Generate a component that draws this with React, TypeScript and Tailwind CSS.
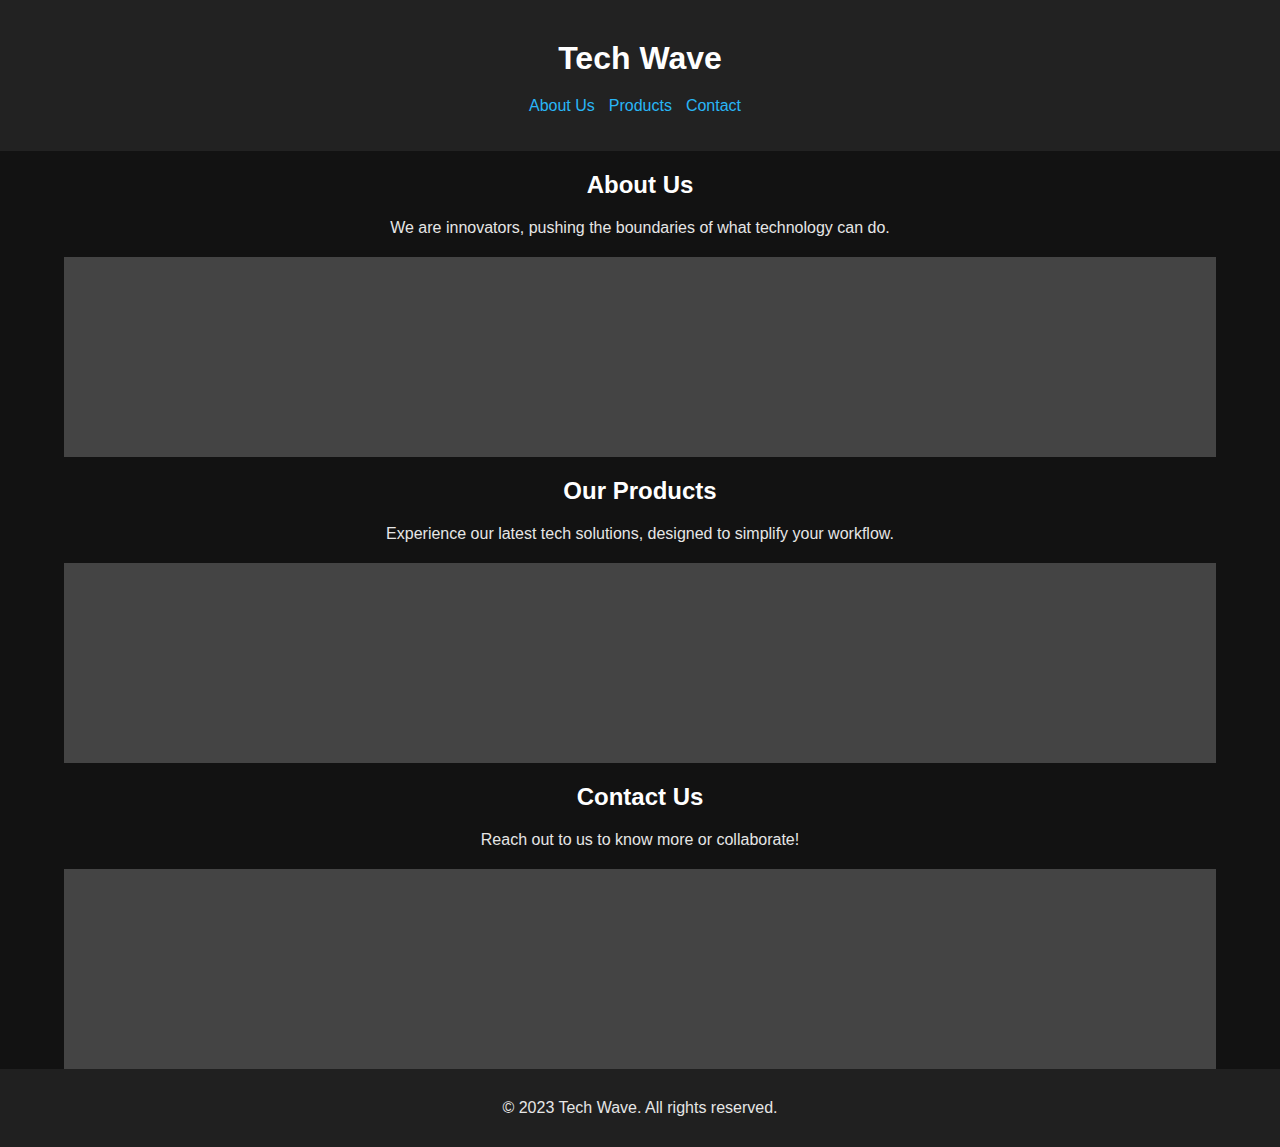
export default function App() {
  const sections = [
    { title: "About Us", text: "We are innovators, pushing the boundaries of what technology can do." },
    { title: "Our Products", text: "Experience our latest tech solutions, designed to simplify your workflow." },
    { title: "Contact Us", text: "Reach out to us to know more or collaborate!" },
  ];
  return (
    <div className="min-h-[1147px] bg-[#121212] text-white flex flex-col" style={{ fontFamily: '"Liberation Sans", Arial, sans-serif' }}>
      <header className="bg-[#222222] h-[151px] pt-[40px] flex flex-col items-center">
        <h1 className="text-[32px] leading-[37px] font-bold text-white">Tech Wave</h1>
        <nav className="mt-[20px] pr-[10px] flex gap-[14px] text-[16px] leading-[18px] text-[#29b6f6]">
          <a href="#about">About Us</a>
          <a href="#products">Products</a>
          <a href="#contact">Contact</a>
        </nav>
      </header>
      <main className="px-16 flex-1">
        {sections.map((s) => (
          <section key={s.title} className="pt-[20px] flex flex-col items-center">
            <h2 className="text-[24px] leading-[28px] font-bold text-white">{s.title}</h2>
            <p className="mt-[20px] text-[16px] leading-[18px] text-[#e6e6e6]">{s.text}</p>
            <div className="mt-[20px] w-full h-[200px] bg-[#444444]" />
          </section>
        ))}
      </main>
      <footer className="bg-[#202020] h-[78px] flex items-center justify-center text-[16px] leading-[18px] text-[#e6e6e6]">
        © 2023 Tech Wave. All rights reserved.
      </footer>
    </div>
  );
}
